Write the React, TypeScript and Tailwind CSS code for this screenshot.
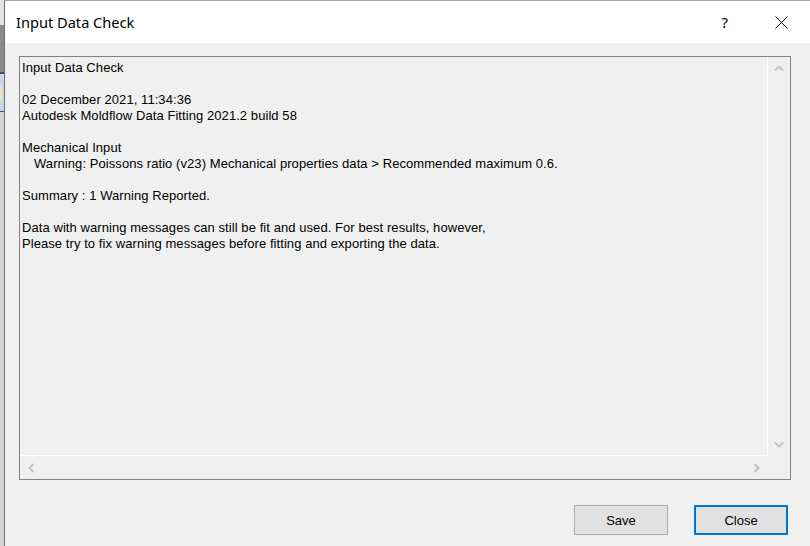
import React from 'react';

const lines: { text: string; indent?: boolean }[] = [
  { text: 'Input Data Check' },
  { text: '' },
  { text: '02 December 2021, 11:34:36' },
  { text: 'Autodesk Moldflow Data Fitting 2021.2 build 58' },
  { text: '' },
  { text: 'Mechanical Input' },
  { text: 'Warning: Poissons ratio (v23) Mechanical properties data > Recommended maximum 0.6.', indent: true },
  { text: '' },
  { text: 'Summary : 1 Warning Reported.' },
  { text: '' },
  { text: 'Data with warning messages can still be fit and used. For best results, however,' },
  { text: 'Please try to fix warning messages before fitting and exporting the data.' },
];

const Chevron: React.FC<{ dir: 'up' | 'down' | 'left' | 'right' }> = ({ dir }) => {
  const rot = { up: 'rotate-0', down: 'rotate-180', left: '-rotate-90', right: 'rotate-90' }[dir];
  return (
    <svg width="10" height="6" viewBox="0 0 10 6" className={rot}>
      <path d="M1 5.5 L5 1.5 L9 5.5" fill="none" stroke="#c2c2c2" strokeWidth="2" />
    </svg>
  );
};

const App: React.FC = () => {
  return (
    <div className="w-[810px] h-[546px] flex overflow-hidden bg-[#f0f0f0]" style={{ fontFamily: '"Liberation Sans", Arial, sans-serif' }}>
      {/* sliver of the window behind */}
      <div className="w-[4px] flex flex-col shrink-0">
        <div className="h-[25px] bg-[#e4e4e4]" />
        <div className="h-[47px] bg-[#8c8c8c]" />
        <div className="h-[2px] bg-[#4f4f4f]" />
        <div className="h-[37px] bg-[#c9d8e8] flex flex-col justify-center">
          <div className="h-[16px] w-[2px] bg-[#efe0c2]" />
        </div>
        <div className="h-[1px] bg-[#4f4f4f]" />
        <div className="flex-1 bg-[#d4d4d4]" />
      </div>

      <div className="flex-1 flex flex-col border-l border-t border-l-[#6e6e6e] border-t-[#a3a3a3]">
        {/* title bar */}
        <div className="h-[42px] bg-white flex items-center shrink-0">
          <span className="ml-[11px] mt-[2px] text-[14.6px] text-black" style={{ fontFamily: '"Noto Sans", "Open Sans", sans-serif' }}>
            Input Data Check
          </span>
          <span className="ml-auto mr-[47px] text-[15px] text-black" style={{ fontFamily: '"Noto Sans", sans-serif' }}>
            ?
          </span>
          <svg width="13" height="13" viewBox="0 0 13 13" className="mr-[22px]">
            <path d="M0.5 0.5 L12.5 12.5 M12.5 0.5 L0.5 12.5" stroke="#000" strokeWidth="1" />
          </svg>
        </div>

        {/* body */}
        <div className="flex-1 flex flex-col">
          <div className="ml-[14px] mt-[13px] w-[772px] h-[424px] border border-[#828282] grid grid-cols-[1fr_22px] grid-rows-[1fr_23px]">
            <div className="border-r border-b border-white pt-[3px] pl-[2px] text-[13px] leading-[16px] tracking-[0.07px] text-black whitespace-pre overflow-hidden">
              {lines.map((l, i) => (
                <div key={i} className={`h-[16px] ${l.indent ? 'pl-[12px]' : ''}`}>
                  {l.text}
                </div>
              ))}
            </div>
            <div className="flex flex-col justify-between">
              <div className="h-[22px] flex items-center justify-center">
                <Chevron dir="up" />
              </div>
              <div className="h-[22px] flex items-center justify-center">
                <Chevron dir="down" />
              </div>
            </div>
            <div className="flex justify-between">
              <div className="w-[22px] flex items-center justify-center">
                <Chevron dir="left" />
              </div>
              <div className="w-[22px] flex items-center justify-center">
                <Chevron dir="right" />
              </div>
            </div>
            <div />
          </div>

          <div className="mt-[25px] flex justify-end gap-[26px] pr-[22px]">
            <button className="w-[94px] h-[30px] pt-[2px] border border-[#adadad] bg-[#e1e1e1] text-[13px] text-black">
              Save
            </button>
            <button className="w-[94px] h-[30px] pt-[2px] border-2 border-[#0078d7] bg-[#e1e1e1] text-[13px] text-black">
              Close
            </button>
          </div>
        </div>
      </div>
    </div>
  );
};

export default App;
